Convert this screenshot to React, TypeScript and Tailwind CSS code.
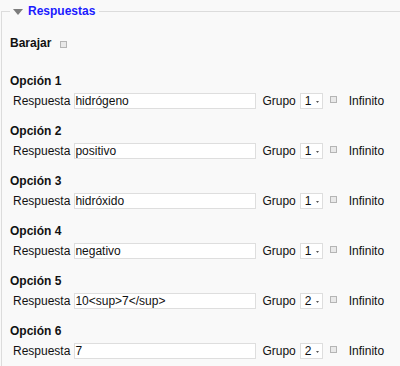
import React from "react";

const options = [
  { n: 1, value: "hidrógeno", grupo: "1" },
  { n: 2, value: "positivo", grupo: "1" },
  { n: 3, value: "hidróxido", grupo: "1" },
  { n: 4, value: "negativo", grupo: "1" },
  { n: 5, value: "10<sup>7</sup>", grupo: "2" },
  { n: 6, value: "7", grupo: "2" },
];

function Check() {
  return (
    <span className="block w-[7px] h-[7px] border border-[#b5b5b5] bg-[#e9e9e9] shrink-0" />
  );
}

export default function App() {
  return (
    <div
      className="w-[400px] h-[366px] bg-[#f9f9f9] pt-[3px] text-[12px] text-[#111] overflow-hidden"
      style={{ fontFamily: '"Liberation Sans", Arial, sans-serif' }}
    >
      <fieldset className="ml-[1px] border-t border-l border-[#dcdcdc] pl-[8px] pb-[20px]">
        <legend className="px-[3px] pr-[4px] h-[16px] leading-[16px]">
          <span className="flex items-center gap-[5px]">
            <svg width="10" height="6" viewBox="0 0 10 6" className="mt-[1px]">
              <polygon points="0,0 10,0 5,6" fill="#7d7d7d" />
            </svg>
            <span className="font-bold text-[#1b1bff]">Respuestas</span>
          </span>
        </legend>
        <div className="flex flex-col gap-[14px] mt-[16px]">
          <div className="flex items-center h-[16px] mb-[8px] leading-[16px]">
            <span className="font-bold">Barajar</span>
            <span className="ml-[9px] mt-[2px]">
              <Check />
            </span>
          </div>
          {options.map((o) => (
            <div key={o.n} className="flex flex-col gap-[4px]">
              <div className="h-[16px] leading-[16px] font-bold">Opción {o.n}</div>
              <div className="flex items-center h-[16px] leading-[16px] pl-[3px]">
                <span>Respuesta</span>
                <div className="ml-[4px] w-[182px] h-[16px] border border-[#dedede] bg-white leading-[14px] overflow-hidden whitespace-nowrap">
                  {o.value}
                </div>
                <span className="ml-[6px]">Grupo</span>
                <div className="ml-[4px] w-[23px] h-[16px] border border-[#dedede] bg-white flex items-center pl-[4px] leading-[14px]">
                  <span>{o.grupo}</span>
                  <svg width="3" height="2" viewBox="0 0 3 2" className="ml-[5px] mt-[2px]">
                    <polygon points="0,0 3,0 1.5,2" fill="#555" />
                  </svg>
                </div>
                <span className="ml-[7px] mb-[3px]">
                  <Check />
                </span>
                <span className="ml-[12px]">Infinito</span>
              </div>
            </div>
          ))}
        </div>
      </fieldset>
    </div>
  );
}
